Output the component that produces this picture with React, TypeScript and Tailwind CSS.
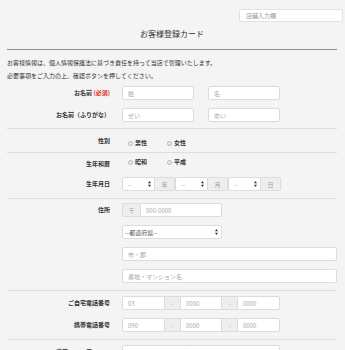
import React from "react";

const inputCls =
  "h-[14px] bg-white border border-[#dcdcdc] rounded-[2px] px-[5px] text-[6px] text-[#555] placeholder:text-[#a8a8a8] outline-none";

function Arrows() {
  return (
    <svg width="3" height="6" viewBox="0 0 3 6" className="shrink-0">
      <path d="M1.5 0 L3 2.3 L0 2.3 Z" fill="#333" />
      <path d="M1.5 6 L3 3.7 L0 3.7 Z" fill="#333" />
    </svg>
  );
}

function Label({ children, className = "" }: { children: React.ReactNode; className?: string }) {
  return (
    <div className={`w-[103px] shrink-0 text-right text-[6px] leading-[8px] font-bold text-[#333] ${className}`}>
      {children}
    </div>
  );
}

function Radio({ text }: { text: string }) {
  return (
    <div className="flex items-center gap-[2px]">
      <span className="w-[5px] h-[5px] rounded-full border border-[#b5b5b5] bg-[#ececec]" />
      <span className="text-[6px] leading-[8px] font-bold text-[#333]">{text}</span>
    </div>
  );
}

function SelectGroup({ addon }: { addon: string }) {
  return (
    <div className="flex h-[14px]">
      <div className="w-[33px] h-full bg-white border border-[#dcdcdc] rounded-l-[2px] flex items-center justify-between pl-[5px] pr-[3px] text-[6px] text-[#999]">
        <span>--</span>
        <Arrows />
      </div>
      <div className="w-[20px] h-full bg-[#eeeeee] border border-l-0 border-[#dcdcdc] rounded-r-[2px] flex items-center justify-center text-[6px] text-[#999]">
        {addon}
      </div>
    </div>
  );
}

function Dash() {
  return (
    <div className="w-[15px] h-[14px] bg-[#eeeeee] border-y border-[#dcdcdc] flex items-center justify-center text-[6px] text-[#999]">
      -
    </div>
  );
}

function PhoneRow({ a }: { a: string }) {
  return (
    <div className="flex h-[14px] w-[158px]">
      <input className={`${inputCls} w-[43px] rounded-r-none`} placeholder={a} />
      <Dash />
      <input className={`${inputCls} w-[42px] rounded-none`} placeholder="0000" />
      <Dash />
      <input className={`${inputCls} w-[43px] rounded-l-none`} placeholder="0000" />
    </div>
  );
}

export default function App() {
  return (
    <div className="w-[345px] h-[350px] overflow-hidden bg-[#f4f4f4] text-[#333] font-['Noto_Sans_CJK_JP','Noto_Sans',sans-serif]">
      <div className="flex justify-end pt-[9px] pr-[2px]">
        <input
          className="w-[104px] h-[13px] bg-white border border-[#e2e2e2] rounded-[2px] pl-[6px] text-[6px] placeholder:text-[#999] outline-none"
          placeholder="店舗入力欄"
        />
      </div>
      <div className="ml-[7px] w-[330px]">
        <h1 className="pt-[7px] pb-[10px] leading-[10px] text-[8px] text-center font-normal text-[#333] border-b border-[#8e8e8e]">
          お客様登録カード
        </h1>
        <p className="pt-[6px] text-[6px] leading-[13px] text-[#333]">
          お客様情報は、個人情報保護法に基づき責任を持って当店で管理いたします。
          <br />
          必要事項をご入力の上、確認ボタンを押してください。
        </p>

        {/* name */}
        <div className="pt-[4px] pb-[6px] border-b border-[#dddddd] flex flex-col gap-[8px]">
          <div className="flex items-center gap-[12px]">
            <Label>
              お名前 <span className="text-[#d9342b]">(必須)</span>
            </Label>
            <div className="flex gap-[14px]">
              <input className={`${inputCls} w-[72px]`} placeholder="姓" />
              <input className={`${inputCls} w-[72px]`} placeholder="名" />
            </div>
          </div>
          <div className="flex items-center gap-[12px]">
            <Label>お名前（ふりがな）</Label>
            <div className="flex gap-[14px]">
              <input className={`${inputCls} w-[72px]`} placeholder="せい" />
              <input className={`${inputCls} w-[72px]`} placeholder="めい" />
            </div>
          </div>
        </div>

        {/* gender */}
        <div className="pt-[5px] h-[24px] border-b border-[#dddddd] flex gap-[12px]">
          <Label className="pt-[3px]">性別</Label>
          <div className="flex gap-[20px] pl-[6px]">
            <Radio text="男性" />
            <Radio text="女性" />
          </div>
        </div>

        {/* era + birthdate */}
        <div className="pt-[5px] pb-[7px] border-b border-[#dddddd]">
          <div className="h-[19px] flex gap-[12px] items-start">
            <Label className="pt-[2px]">生年和暦</Label>
            <div className="flex gap-[20px] pl-[6px] h-[8px]">
              <Radio text="昭和" />
              <Radio text="平成" />
            </div>
          </div>
          <div className="flex items-center gap-[12px]">
            <Label>生年月日</Label>
            <div className="flex">
              <SelectGroup addon="年" />
              <SelectGroup addon="月" />
              <SelectGroup addon="日" />
            </div>
          </div>
        </div>

        {/* address */}
        <div className="pt-[4px] pb-[7px] border-b border-[#dddddd] flex gap-[12px]">
          <Label className="pt-[3px]">住所</Label>
          <div className="flex flex-col gap-[8px]">
            <div className="flex h-[14px] w-[100px]">
              <div className="w-[18px] h-full bg-[#eeeeee] border border-r-0 border-[#dcdcdc] rounded-l-[2px] flex items-center justify-center text-[6px] text-[#999]">
                〒
              </div>
              <input className={`${inputCls} w-[82px] rounded-l-none`} placeholder="000-0000" />
            </div>
            <div className="w-[100px] h-[14px] bg-white border border-[#dcdcdc] rounded-[2px] flex items-center justify-between pl-[2px] pr-[3px] text-[6px] text-[#555]">
              <span>--都道府県--</span>
              <Arrows />
            </div>
            <input className={`${inputCls} w-[215px]`} placeholder="市・郡" />
            <input className={`${inputCls} w-[215px]`} placeholder="番地・マンション名" />
          </div>
        </div>

        {/* phones */}
        <div className="pt-[5px] pb-[7px] border-b border-[#dddddd] flex flex-col gap-[8px]">
          <div className="flex items-center gap-[12px]">
            <Label>ご自宅電話番号</Label>
            <PhoneRow a="03" />
          </div>
          <div className="flex items-center gap-[12px]">
            <Label>携帯電話番号</Label>
            <PhoneRow a="090" />
          </div>
        </div>

        {/* mail */}
        <div className="pt-[5px] flex items-center gap-[12px]">
          <Label>携帯メールアドレス</Label>
          <input className={`${inputCls} w-[158px]`} placeholder="メールアドレスを入力してください" />
        </div>
      </div>
    </div>
  );
}
